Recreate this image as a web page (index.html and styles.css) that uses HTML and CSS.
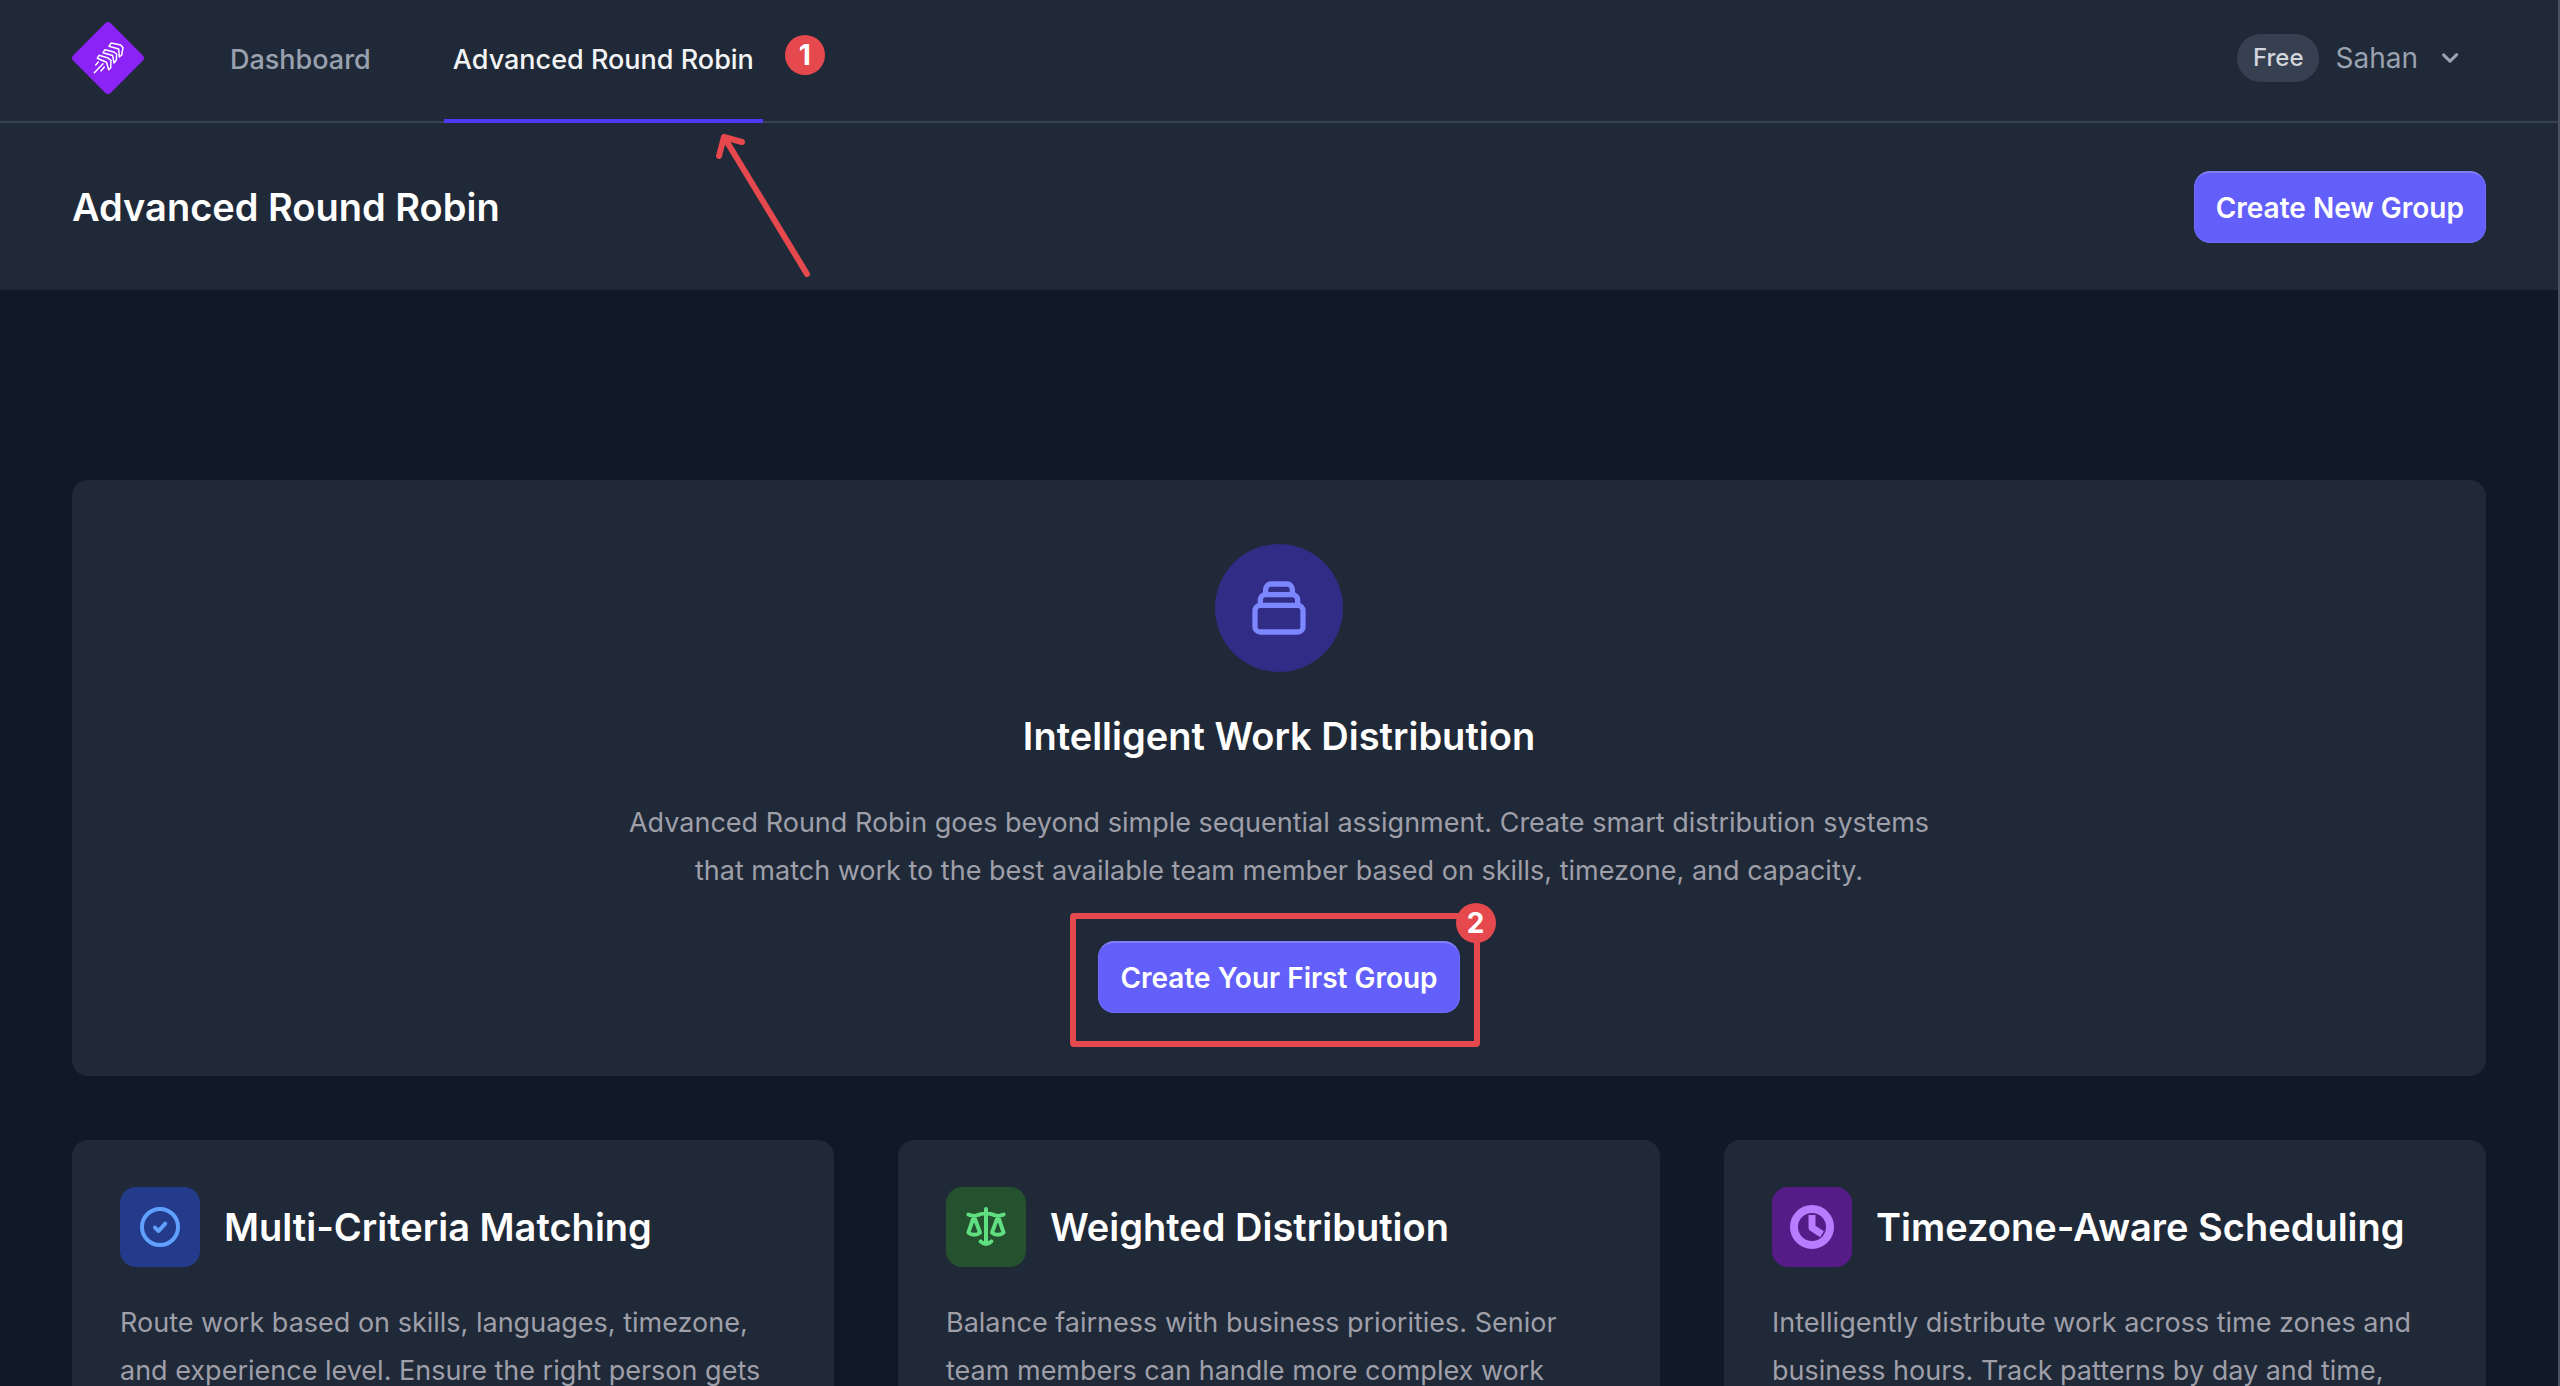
FILE: index.html
```html
<!DOCTYPE html>
<html lang="en">
<head>
<meta charset="utf-8">
<title>Advanced Round Robin</title>
<link rel="stylesheet" href="styles.css">
</head>
<body>
<header class="topbar">
  <a class="logo" href="#" aria-label="Home">
    <svg width="76" height="76" viewBox="0 0 76 76" fill="none">
      <rect x="11.500" y="11.500" width="53" height="53" rx="4" fill="#8b22f6" transform="rotate(45 38 38)"/>
      <g stroke="#fff" stroke-width="1.500" stroke-linejoin="round" stroke-linecap="round">
        <path d="M39 26.300L41.300 23L50.700 25L53 27.700L51.700 35L49.300 37L48.700 29z"/>
        <path d="M33 32.700L35 29.700L44 32L46.700 34.300L46.300 40.300L44 43L42.700 35.500z"/>
        <path d="M27.300 38.300L29 35.300L37.300 37.700L41 40.300L40.700 47.700L38.700 49.700L36.500 42.300z"/>
        <path d="M33 43.700L24.300 52.700M28.300 42L25.700 45M34.300 47L31 51"/>
      </g>
    </svg>
  </a>
  <nav class="tabs">
    <a class="tab" href="#">Dashboard</a>
    <a class="tab tab-active" href="#">Advanced Round Robin
      <span class="marker marker-nav">1</span>
      <svg class="arrow" width="100" height="150" viewBox="0 0 100 150" fill="none" stroke="#e5484d" stroke-width="6" stroke-linecap="round" stroke-linejoin="round"><path d="M92 143L9 6M4 25L9 6L27 11"/></svg>
    </a>
  </nav>
  <div class="account">
    <span class="plan">Free</span>
    <button class="user" type="button">Sahan
      <svg width="32" height="32" viewBox="0 0 20 20" fill="#9ca3af"><path d="M5.3 7.3a1 1 0 0 1 1.4 0L10 10.6l3.3-3.3a1 1 0 1 1 1.4 1.4l-4 4a1 1 0 0 1-1.4 0l-4-4a1 1 0 0 1 0-1.4z"/></svg>
    </button>
  </div>
</header>
<div class="page-head">
  <h1 class="title">Advanced Round Robin</h1>
  <button class="btn" type="button">Create New Group</button>
</div>
<main class="content">
  <section class="hero">
    <div class="hero-icon">
      <svg width="64" height="64" viewBox="0 0 24 24" fill="none" stroke="#7c86ff" stroke-width="2" stroke-linecap="round" stroke-linejoin="round"><path d="M19 11H5m14 0a2 2 0 0 1 2 2v6a2 2 0 0 1-2 2H5a2 2 0 0 1-2-2v-6a2 2 0 0 1 2-2m14 0V9a2 2 0 0 0-2-2M5 11V9a2 2 0 0 1 2-2m0 0V5a2 2 0 0 1 2-2h6a2 2 0 0 1 2 2v2M7 7h10"/></svg>
    </div>
    <h2 class="title">Intelligent Work Distribution</h2>
    <p class="text hero-text">Advanced Round Robin goes beyond simple sequential assignment. Create smart distribution systems that match work to the best available team member based on skills, timezone, and capacity.</p>
    <div class="hero-action">
      <button class="btn" type="button">Create Your First Group</button>
      <div class="highlight"><span class="marker marker-box">2</span></div>
    </div>
  </section>
  <div class="features">
    <article class="card">
      <div class="card-head">
        <div class="badge badge-blue"><svg width="48" height="48" viewBox="0 0 24 24" fill="none" stroke="#60a0ff" stroke-width="2" stroke-linecap="round" stroke-linejoin="round"><path d="M9.500 12.300l1.800 1.700 3.300-3.700M21 12a9 9 0 1 1-18 0 9 9 0 0 1 18 0z"/></svg></div>
        <h3 class="title">Multi-Criteria Matching</h3>
      </div>
      <p class="text">Route work based on skills, languages, timezone, and experience level. Ensure the right person gets the right task.</p>
    </article>
    <article class="card">
      <div class="card-head">
        <div class="badge badge-green"><svg width="48" height="48" viewBox="0 0 24 24" fill="none" stroke="#5fdf80" stroke-width="2" stroke-linecap="round" stroke-linejoin="round"><path d="M3.200 5.800L6 6.600L12 4.800L18 6.600L20.800 5.800M12 3v17M6 6.600L3.200 14.800a3.600 2.600 0 0 0 5.800 0zM18 6.600L15 14.800a3.600 2.600 0 0 0 5.800 0zM9.300 19.200Q12 21.800 14.700 19.200"/></svg></div>
        <h3 class="title">Weighted Distribution</h3>
      </div>
      <p class="text">Balance fairness with business priorities. Senior team members can handle more complex work while juniors grow.</p>
    </article>
    <article class="card">
      <div class="card-head">
        <div class="badge badge-purple"><svg width="48" height="48" viewBox="0 0 24 24" fill="none" stroke="#b97bff" stroke-linejoin="round"><circle cx="12" cy="12" r="9" stroke-width="4"/><path stroke-width="3.500" d="M12 6v6.400l5 3.200"/></svg></div>
        <h3 class="title">Timezone-Aware Scheduling</h3>
      </div>
      <p class="text">Intelligently distribute work across time zones and business hours. Track patterns by day and time, automatically.</p>
    </article>
  </div>
</main>
</body>
</html>
```
FILE: styles.css
```css
* { box-sizing: border-box; }
html { height: 100%; overflow: hidden; }
body {
  margin: 0;
  height: 100%;
  overflow: hidden;
  background: #111827;
  color: #fff;
  font-family: Inter, "Liberation Sans", sans-serif;
  font-size: 28px;
  border-right: 2px solid #4b525d;
}
h1, h2, h3, p { margin: 0; }
.topbar {
  display: flex;
  height: 123px;
  padding: 0 72px 0 70px;
  background: #202938;
  border-bottom: 2px solid #364152;
}
.logo { margin-top: 20px; height: 76px; }
.tabs { display: flex; gap: 64px; margin-left: 75px; }
.tab {
  position: relative;
  padding: 0 9px;
  height: 123px;
  color: #99a1af;
  font-size: 27px;
  font-weight: 500;
  line-height: 120px;
  text-decoration: none;
}
.tab-active { color: #f3f4f6; border-bottom: 4px solid #4f39f6; }
.marker {
  position: absolute;
  width: 40px;
  height: 40px;
  border-radius: 50%;
  background: #e5484d;
  color: #fff;
  font-size: 28px;
  font-weight: 700;
  line-height: 40px;
  text-align: center;
}
.marker-nav { left: calc(100% + 22px); top: 35px; }
.arrow { position: absolute; right: -52px; top: 131px; }
.account { display: flex; align-items: center; height: 116px; margin-left: auto; gap: 16px; }
.plan {
  padding: 0 16px;
  border-radius: 24px;
  background: #364050;
  color: #d1d5dc;
  font-size: 24px;
  font-weight: 500;
  line-height: 48px;
}
.user {
  display: flex;
  align-items: center;
  gap: 16px;
  padding: 0 20px 0 0;
  border: 0;
  background: none;
  color: #99a1af;
  font: inherit;
}
.page-head {
  display: flex;
  align-items: center;
  justify-content: space-between;
  padding: 48px 72px 47px;
  background: #202938;
}
.title { font-size: 38px; line-height: 56px; font-weight: 600; }
.btn {
  height: 72px;
  padding: 0 21px;
  border: 1px solid #6f6bf5;
  border-top: 2px solid #817dfb;
  border-radius: 16px;
  background: #625ffa;
  color: #fff;
  font: inherit;
  font-weight: 600;
}
.content { padding: 190px 72px 0; }
.hero, .card { background: #202938; border-radius: 16px; }
.hero { display: flex; flex-direction: column; align-items: center; padding: 64px 64px 63px; }
.hero-icon {
  display: grid;
  place-items: center;
  width: 128px;
  height: 128px;
  margin-bottom: 36px;
  border-radius: 50%;
  background: #312c85;
}
.text { color: #9f9fa9; font-size: 27px; line-height: 48px; }
.hero-text { max-width: 1344px; margin: 35px 0 46px; text-align: center; }
.hero-action { position: relative; }
.highlight {
  position: absolute;
  inset: -28px -20px -34px -28px;
  border: 6px solid #e5484d;
  border-radius: 4px;
  pointer-events: none;
}
.marker-box { right: -22px; top: -16px; }
.features { display: grid; grid-template-columns: repeat(3, 1fr); gap: 64px; margin-top: 64px; }
.card { padding: 47px 48px; }
.card-head { display: flex; align-items: center; gap: 24px; margin-bottom: 32px; }
.badge { display: grid; place-items: center; width: 80px; height: 80px; border-radius: 16px; }
.badge-blue { background: #243a8a; }
.badge-green { background: #25522e; }
.badge-purple { background: #551b87; }
```
